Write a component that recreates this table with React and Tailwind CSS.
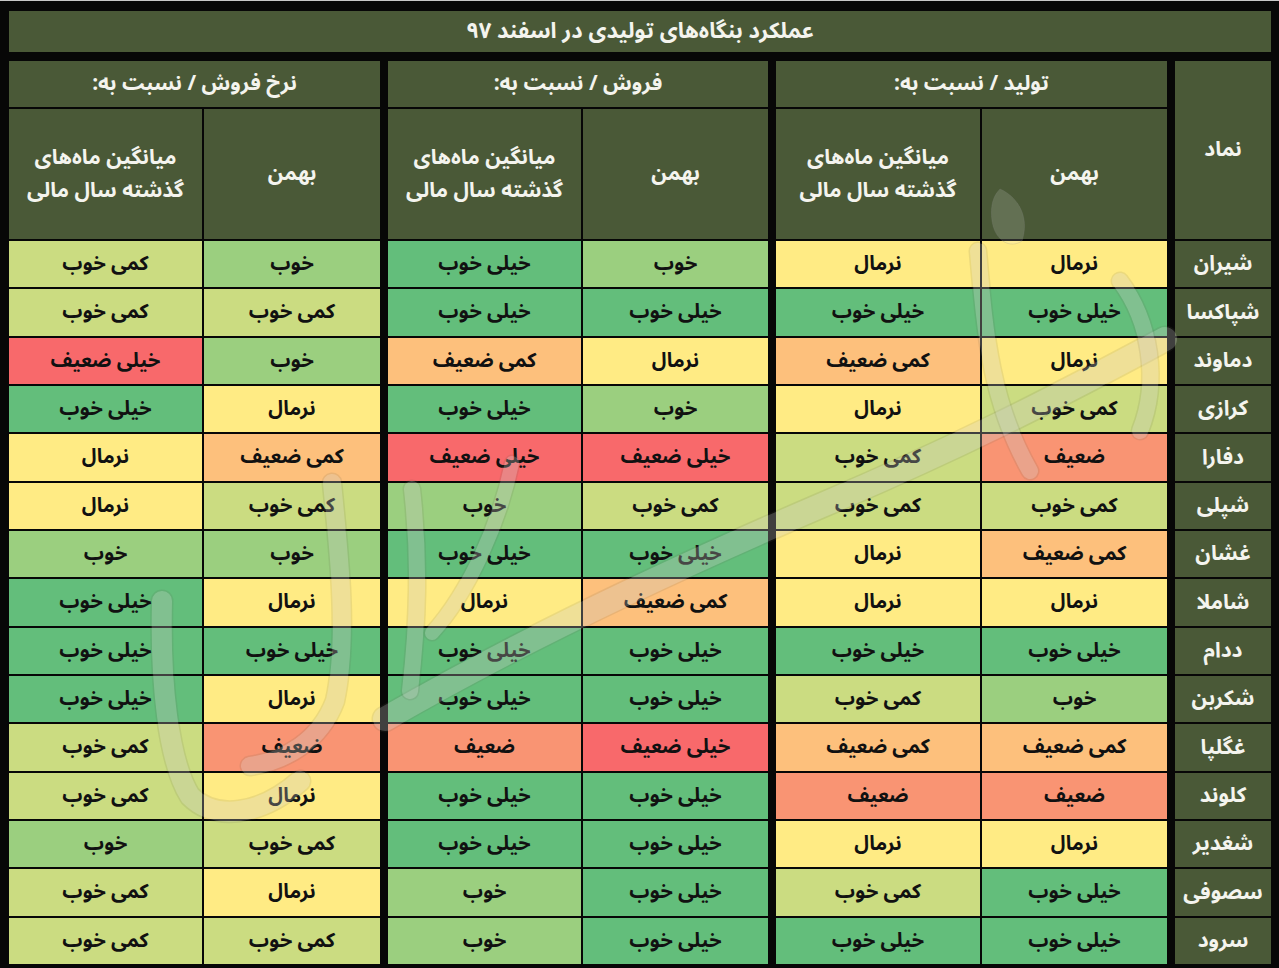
import React from "react";

const COLORS = {
  "خیلی خوب": "bg-[#63be7b]",
  "خوب": "bg-[#9bcf7f]",
  "کمی خوب": "bg-[#cbdc81]",
  "نرمال": "bg-[#ffeb84]",
  "کمی ضعیف": "bg-[#fdc07c]",
  "ضعیف": "bg-[#f99473]",
  "خیلی ضعیف": "bg-[#f8696b]",
};

const ROWS = [
  ["شیران", "نرمال", "نرمال", "خوب", "خیلی خوب", "خوب", "کمی خوب"],
  ["شپاکسا", "خیلی خوب", "خیلی خوب", "خیلی خوب", "خیلی خوب", "کمی خوب", "کمی خوب"],
  ["دماوند", "نرمال", "کمی ضعیف", "نرمال", "کمی ضعیف", "خوب", "خیلی ضعیف"],
  ["کرازی", "کمی خوب", "نرمال", "خوب", "خیلی خوب", "نرمال", "خیلی خوب"],
  ["دفارا", "ضعیف", "کمی خوب", "خیلی ضعیف", "خیلی ضعیف", "کمی ضعیف", "نرمال"],
  ["شپلی", "کمی خوب", "کمی خوب", "کمی خوب", "خوب", "کمی خوب", "نرمال"],
  ["غشان", "کمی ضعیف", "نرمال", "خیلی خوب", "خیلی خوب", "خوب", "خوب"],
  ["شاملا", "نرمال", "نرمال", "کمی ضعیف", "نرمال", "نرمال", "خیلی خوب"],
  ["ددام", "خیلی خوب", "خیلی خوب", "خیلی خوب", "خیلی خوب", "خیلی خوب", "خیلی خوب"],
  ["شکربن", "خوب", "کمی خوب", "خیلی خوب", "خیلی خوب", "نرمال", "خیلی خوب"],
  ["غگلپا", "کمی ضعیف", "کمی ضعیف", "خیلی ضعیف", "ضعیف", "ضعیف", "کمی خوب"],
  ["کلوند", "ضعیف", "ضعیف", "خیلی خوب", "خیلی خوب", "نرمال", "کمی خوب"],
  ["شغدیر", "نرمال", "نرمال", "خیلی خوب", "خیلی خوب", "کمی خوب", "خوب"],
  ["سصوفی", "خیلی خوب", "کمی خوب", "خیلی خوب", "خوب", "نرمال", "کمی خوب"],
  ["سرود", "خیلی خوب", "خیلی خوب", "خیلی خوب", "خوب", "کمی خوب", "کمی خوب"],
];

const HEAD = "bg-[#4a5937] text-[#f4f4ee] flex items-center justify-center text-center";

function Watermark() {
  const s = { stroke: "#ffffff", strokeOpacity: 0.2, fill: "none", strokeLinecap: "round", strokeLinejoin: "round" };
  const o = { stroke: "#5a5a4a", strokeOpacity: 0.12, fill: "none", strokeLinecap: "round", strokeLinejoin: "round" };
  const paths = [
    { d: "M1165 338 C 1050 400, 950 450, 820 505 C 680 565, 520 640, 385 718", w: 24 },
    { d: "M332 482 C 340 560, 348 640, 335 700 C 320 740, 285 760, 250 765", w: 18 },
    { d: "M162 600 C 160 680, 168 760, 190 795 C 215 820, 260 815, 300 780", w: 20 },
    { d: "M412 488 C 420 560, 418 620, 410 690", w: 16 },
    { d: "M512 462 C 500 520, 470 590, 432 632", w: 14 },
    { d: "M978 250 C 985 330, 990 400, 1030 470", w: 16 },
    { d: "M1120 280 C 1150 320, 1160 380, 1140 430", w: 16 },
  ];
  return (
    <svg className="absolute inset-0 pointer-events-none" width="1279" height="968" viewBox="0 0 1279 968">
      {paths.map((p, i) => (
        <g key={i}>
          <path d={p.d} {...o} strokeWidth={p.w + 3} />
          <path d={p.d} {...s} strokeWidth={p.w} />
        </g>
      ))}
      <path d="M1000 188 C 1018 196, 1030 216, 1022 240 C 1010 248, 995 240, 992 220 C 990 205, 993 195, 1000 188 Z" fill="#ffffff" fillOpacity="0.14" stroke="#888" strokeOpacity="0.2" />
    </svg>
  );
}

export default function App() {
  return (
    <div
      className="relative w-[1279px] h-[968px] bg-[#070707] overflow-hidden border-t border-[#c8c8c8] pt-[10px] pl-[9px] pr-[8px] font-['Noto_Sans_Arabic','DejaVu_Sans',sans-serif] font-bold"
      dir="rtl"
    >
      <div className={`${HEAD} h-[41px] text-[22px]`}>عملکرد بنگاه‌های تولیدی در اسفند ۹۷</div>
      <div className="mt-[9px] grid h-[903px] gap-[2px] grid-cols-[96px_4px_185px_204px_4px_185px_193px_4px_176px_193px] grid-rows-[46px_130px_repeat(15,minmax(0,1fr))]">
        <div className={`${HEAD} row-span-2 text-[21px]`}>نماد</div>
        <div />
        <div className={`${HEAD} col-span-2 text-[21px]`}>تولید / نسبت به:</div>
        <div />
        <div className={`${HEAD} col-span-2 text-[21px]`}>فروش / نسبت به:</div>
        <div />
        <div className={`${HEAD} col-span-2 text-[21px]`}>نرخ فروش / نسبت به:</div>

        <div />
        {[0, 1, 2].map((g) => (
          <React.Fragment key={g}>
            <div className={`${HEAD} text-[21px]`}>بهمن</div>
            <div className={`${HEAD} flex-col text-[21px]`}>
              <span className="block h-[33px] leading-[33px]">میانگین ماه‌های</span>
              <span className="block h-[33px] leading-[33px]">گذشته سال مالی</span>
            </div>
            {g < 2 && <div />}
          </React.Fragment>
        ))}

        {ROWS.map((r) => (
          <React.Fragment key={r[0]}>
            <div className={`${HEAD} text-[21px]`}>{r[0]}</div>
            <div />
            {r.slice(1).map((v, i) => (
              <React.Fragment key={i}>
                <div className={`${COLORS[v]} flex items-center justify-center text-[20px] text-[#111]`}>{v}</div>
                {(i === 1 || i === 3) && <div />}
              </React.Fragment>
            ))}
          </React.Fragment>
        ))}
      </div>
      <Watermark />
    </div>
  );
}
